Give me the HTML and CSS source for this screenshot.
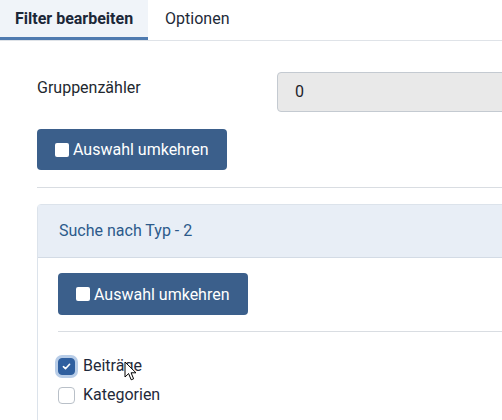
FILE: index.html
```html
<!DOCTYPE html>
<html lang="de">
<head>
<meta charset="utf-8">
<title>Filter bearbeiten</title>
<link rel="stylesheet" href="styles.css">
</head>
<body>
<div class="page">
  <nav class="tabs">
    <div class="tab active">Filter bearbeiten</div>
    <div class="tab">Optionen</div>
  </nav>
  <div class="content">
    <div class="form-row">
      <label class="form-label">Gruppenzähler</label>
      <div class="form-input">0</div>
    </div>
    <button class="btn"><span class="sq"></span>Auswahl umkehren</button>
    <hr class="sep">
    <section class="card">
      <header class="card-head">Suche nach Typ - 2</header>
      <div class="card-body">
        <button class="btn"><span class="sq"></span>Auswahl umkehren</button>
        <hr class="sep">
        <div class="checks">
          <label class="check">
            <span class="box checked"><svg viewBox="0 0 16 16" width="11" height="11"><path d="M3.5 8.3 6.5 11.2 12.5 4.8" fill="none" stroke="#fff" stroke-width="2.4" stroke-linecap="round" stroke-linejoin="round"/></svg></span>
            <span>Beiträge</span>
            <svg class="cursor" viewBox="0 0 13 21" width="13" height="21"><path d="M1 1 L1 16 L4.6 12.6 L7.2 18.8 L9.6 17.8 L7.1 11.8 L12 11.8 Z" fill="#fff" stroke="#000" stroke-width="1" stroke-linejoin="round"/></svg>
          </label>
          <label class="check">
            <span class="box"></span>
            <span>Kategorien</span>
          </label>
        </div>
      </div>
    </section>
  </div>
</div>
</body>
</html>
```

FILE: styles.css
```css
html, body {
  margin: 0;
  padding: 0;
  background: #fff;
  overflow: hidden;
}
body {
  font-family: Roboto, "Liberation Sans", sans-serif;
  font-size: 16px;
  color: #22282f;
}
.page {
  width: 760px;
}
.tabs {
  display: flex;
  border-bottom: 1px solid #dfe3e8;
}
.tab {
  height: 40px;
  line-height: 37px;
  padding: 0 15px;
  font-size: 16px;
  color: #1e2a38;
}
.tab.active {
  font-weight: 700;
  background: #f0f4f9;
  box-shadow: inset 0 -3px 0 #4f7bb0;
  color: #1b2738;
}
.tab + .tab {
  padding-left: 17px;
}
.content {
  padding: 31px 0 0 37px;
}
.form-row {
  display: flex;
  align-items: flex-start;
}
.form-label {
  width: 240px;
  padding-top: 7px;
  line-height: 18px;
}
.form-input {
  flex: 1;
  height: 38px;
  line-height: 38px;
  padding-left: 17px;
  background: #e9e9e9;
  border: 1px solid #c4cad1;
  border-radius: 4px;
  color: #1d2329;
}
.btn {
  display: flex;
  align-items: center;
  gap: 4px;
  margin-top: 17px;
  height: 41px;
  padding: 0 18px;
  background: #3b5f8b;
  color: #fff;
  border: none;
  border-radius: 4px;
  font-family: inherit;
  font-size: 16px;
}
.sq {
  width: 14px;
  height: 14px;
  background: #fff;
  border-radius: 2px;
}
.sep {
  margin: 17px 0 0;
  border: none;
  border-top: 1px solid #d9dde2;
}
.card {
  margin-top: 16px;
  border: 1px solid #dce3eb;
  border-radius: 4px;
  min-height: 260px;
}
.card-head {
  height: 52px;
  line-height: 52px;
  padding-left: 21px;
  background: #e8eef6;
  border-bottom: 1px solid #d3dbe5;
  color: #2c5a8b;
}
.card-body {
  padding: 0 0 0 20px;
}
.card-body .btn {
  margin-top: 15px;
  height: 42px;
}
.card-body .sep {
  margin-top: 16px;
}
.checks {
  padding-top: 25px;
  display: flex;
  flex-direction: column;
  gap: 11px;
}
.check {
  display: flex;
  align-items: center;
  gap: 8px;
  line-height: 18px;
  color: #1f2a3a;
  position: relative;
}
.box {
  width: 15px;
  height: 15px;
  border: 1px solid #b9c0c8;
  border-radius: 4px;
  background: #fff;
  display: flex;
  align-items: center;
  justify-content: center;
}
.box.checked {
  background: #2f5f9f;
  border-color: #2f5f9f;
  box-shadow: 0 0 0 3px #b8cde8;
}
.cursor {
  position: absolute;
  left: 66px;
  top: 4px;
}
```
